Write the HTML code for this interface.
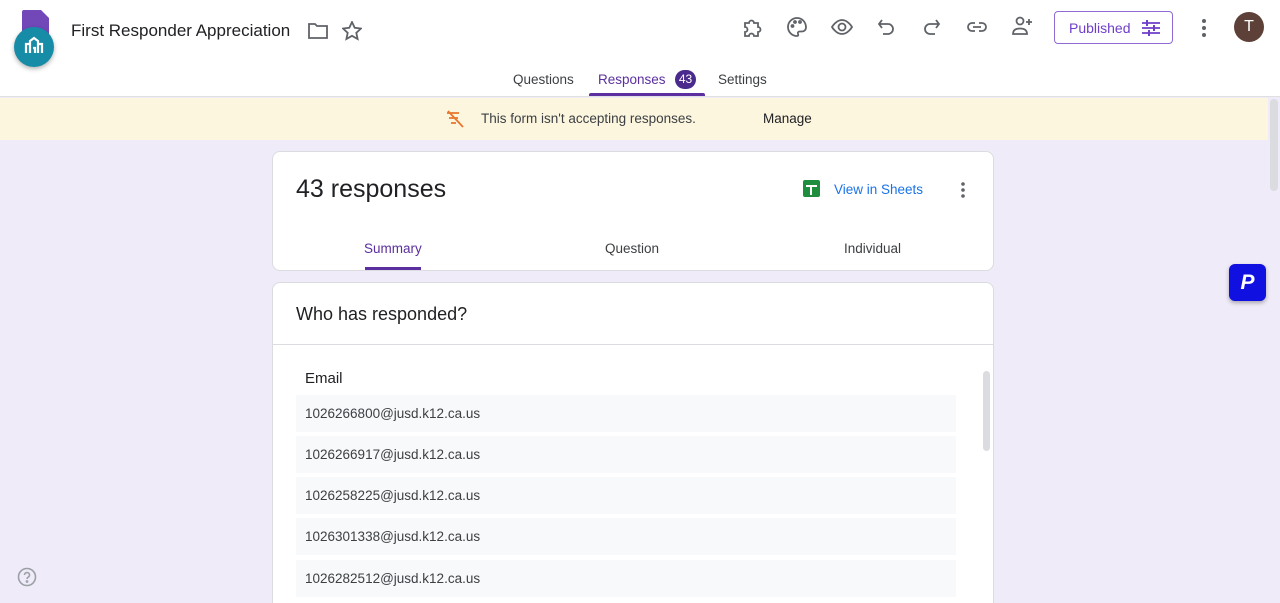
<!DOCTYPE html>
<html><head><style>
*{box-sizing:border-box;margin:0;padding:0}
html,body{width:1280px;height:603px;overflow:hidden}
body{background:#f0ebf8;font-family:"Liberation Sans",Roboto,sans-serif;position:relative;color:#202124}
.hdr{position:absolute;left:0;top:0;width:1280px;height:97px;background:#fff;border-bottom:1px solid #e0e0e0}
.title{position:absolute;left:71px;top:21px;font-size:17px;color:#202124}
.ic{position:absolute;stroke:#5f6368;fill:none;stroke-width:1.8}
.tabs span{position:absolute;top:72px;font-size:13.5px;color:#3c4043}
.banner{position:absolute;left:0;top:98px;width:1268px;height:42px;background:#fdf6df}
.card{position:absolute;background:#fff;border:1px solid #dadce0;border-radius:8px}
.em{position:absolute;left:296px;width:660px;height:37px;background:#f8f9fa;font-size:13.5px;color:#3c4043;padding:11px 0 0 9px}
</style></head><body>
<div class="hdr">
<svg style="position:absolute;left:22px;top:10px" width="28" height="34"><path d="M2 0h17l8 8v24a2 2 0 0 1-2 2H2a2 2 0 0 1-2-2V2a2 2 0 0 1 2-2z" fill="#7248b9"/></svg>
<div style="position:absolute;left:14px;top:27px;width:40px;height:40px;border-radius:50%;background:#178ca6;box-shadow:0 2px 5px rgba(0,0,0,.3)"><svg width="40" height="40"><path d="M12 26v-9h4M16 26v-12l4-3 4 3v12M24 17h4v9M19 21h2v5" stroke="#fff" stroke-width="2.2" fill="none"/></svg></div>
<div class="title">First Responder Appreciation</div>
<svg class="ic" style="left:308px;top:22px" width="20" height="18"><path d="M1 2h6l2 2h10v12H1z"/></svg>
<svg class="ic" style="left:342px;top:21px" width="20" height="20" stroke-width="1.5"><path d="M10 1l2.7 5.8 6.3.7-4.7 4.3 1.3 6.2L10 14.8 4.4 18l1.3-6.2L1 7.5l6.3-.7z"/></svg>
<svg class="ic" style="left:741px;top:16px" width="22" height="22"><path d="M4 7h4a2.5 2.5 0 0 1 5 0h4v4a2.5 2.5 0 0 1 0 5v4h-4a2.5 2.5 0 0 0-5 0H4v-4a2.5 2.5 0 0 0 0-5z"/></svg>
<svg class="ic" style="left:786px;top:16px" width="22" height="22"><path d="M11 2a9 9 0 0 0 0 18c1.5 0 1.5-1 1-2s0-2.5 1.5-2.5H16a4 4 0 0 0 4-4C20 6 16 2 11 2z"/><circle cx="6.5" cy="10" r="1"/><circle cx="9" cy="6" r="1"/><circle cx="14" cy="6" r="1"/></svg>
<svg class="ic" style="left:831px;top:16px" width="22" height="22"><path d="M1 11s4-7 10-7 10 7 10 7-4 7-10 7S1 11 1 11z"/><circle cx="11" cy="11" r="3.5"/></svg>
<svg class="ic" style="left:877px;top:17px" width="20" height="20"><path d="M5 3L2 7l3 4M2 7h9a5 5 0 0 1 0 10H6"/></svg>
<svg class="ic" style="left:921px;top:17px" width="20" height="20"><path d="M15 3l3 4-3 4M18 7H9a5 5 0 0 0 0 10h5"/></svg>
<svg class="ic" style="left:966px;top:17px" width="22" height="20"><path d="M9 6H6a4 4 0 0 0 0 8h3M13 6h3a4 4 0 0 1 0 8h-3M7 10h8"/></svg>
<svg class="ic" style="left:1010px;top:15px" width="24" height="22"><circle cx="10" cy="6" r="3.5"/><path d="M3 19c0-4 3-5.5 7-5.5s7 1.5 7 5.5zM19 4v6M16 7h6"/></svg>
<div style="position:absolute;left:1054px;top:11px;width:119px;height:33px;border:1px solid #8e6cd4;border-radius:4px;color:#6f3fca;font-size:14px;padding:8px 0 0 14px">Published<svg style="position:absolute;left:86px;top:7px" width="20" height="18" stroke="#6f3fca" stroke-width="1.8"><path d="M1 4h18M1 9h18M1 14h18"/><path d="M6 1v6M13 6v6M8 11v6" stroke-width="2"/></svg></div>
<svg style="position:absolute;left:1201px;top:18px" width="6" height="20" fill="#5f6368"><circle cx="3" cy="3" r="2"/><circle cx="3" cy="10" r="2"/><circle cx="3" cy="17" r="2"/></svg>
<div style="position:absolute;left:1234px;top:12px;width:30px;height:30px;border-radius:50%;background:#5d4037;color:#fff;font-size:16px;text-align:center;line-height:30px">T</div>
<div class="tabs"><span style="left:513px">Questions</span><span style="left:598px;color:#5b2f9f">Responses</span><span style="left:718px">Settings</span></div>
<div style="position:absolute;left:675px;top:70px;width:21px;height:19px;border-radius:10px;background:#4a2a8c;color:#fff;font-size:12px;text-align:center;line-height:19px">43</div>
<div style="position:absolute;left:589px;top:93px;width:116px;height:3px;background:#5b2f9f;border-radius:2px 2px 0 0"></div>
</div>
<div class="banner">
<svg style="position:absolute;left:446px;top:12px" width="20" height="18" stroke="#e8762b" stroke-width="1.8" fill="none"><path d="M1 3h12M3 8h9M5 13h5M2 1l15 16"/></svg>
<div style="position:absolute;left:481px;top:13px;font-size:13.5px;color:#3c4043">This form isn't accepting responses.</div>
<div style="position:absolute;left:763px;top:13px;font-size:13.5px;color:#202124">Manage</div>
</div>
<div style="position:absolute;left:1269px;top:98px;width:11px;height:505px;background:#f0ebf8"></div>
<div style="position:absolute;left:1270px;top:99px;width:8px;height:92px;border-radius:4px;background:#dadce0"></div>
<div class="card" style="left:272px;top:151px;width:722px;height:120px">
<div style="position:absolute;left:23px;top:23px;font-size:25px;color:#202124">43 responses</div>
<div style="position:absolute;left:530px;top:28px;width:17px;height:17px;background:#1e8e3e;border-radius:2px"><svg width="17" height="17" stroke="#fff" stroke-width="2"><path d="M3 6h11M8 6v9"/></svg></div>
<div style="position:absolute;left:561px;top:30px;font-size:13.5px;color:#1a73e8">View in Sheets</div>
<svg style="position:absolute;left:687px;top:29px" width="6" height="18" fill="#5f6368"><circle cx="3" cy="3" r="1.8"/><circle cx="3" cy="9" r="1.8"/><circle cx="3" cy="15" r="1.8"/></svg>
<div style="position:absolute;left:91px;top:89px;font-size:13.5px;color:#5b2f9f">Summary</div>
<div style="position:absolute;left:92px;top:115px;width:56px;height:3px;background:#5b2f9f"></div>
<div style="position:absolute;left:332px;top:89px;font-size:13.5px;color:#3c4043">Question</div>
<div style="position:absolute;left:571px;top:89px;font-size:13.5px;color:#3c4043">Individual</div>
</div>
<div class="card" style="left:272px;top:282px;width:722px;height:340px">
<div style="position:absolute;left:23px;top:21px;font-size:18px">Who has responded?</div>
<div style="position:absolute;left:0;top:61px;width:720px;height:1px;background:#dadce0"></div>
<div style="position:absolute;left:32px;top:87px;font-size:15px;color:#202124">Email</div>
<div style="position:absolute;left:710px;top:88px;width:7px;height:80px;border-radius:4px;background:#dadce0"></div>
</div>
<div class="em" style="top:395px">1026266800@jusd.k12.ca.us</div>
<div class="em" style="top:436px">1026266917@jusd.k12.ca.us</div>
<div class="em" style="top:477px">1026258225@jusd.k12.ca.us</div>
<div class="em" style="top:518px">1026301338@jusd.k12.ca.us</div>
<div class="em" style="top:560px">1026282512@jusd.k12.ca.us</div>
<div style="position:absolute;left:1229px;top:264px;width:37px;height:37px;border-radius:6px;background:#1010e0;box-shadow:0 2px 4px rgba(0,0,0,.3);color:#fff;font:italic bold 21px 'Liberation Sans',sans-serif;text-align:center;line-height:37px">P</div>
<svg style="position:absolute;left:17px;top:567px" width="20" height="20" stroke="#9aa0a6" stroke-width="1.6" fill="none"><circle cx="10" cy="10" r="8.5"/><path d="M7.5 8a2.5 2.5 0 1 1 3.5 2.3c-.7.4-1 .8-1 1.7"/><circle cx="10" cy="14.5" r=".6"/></svg>
</body></html>
